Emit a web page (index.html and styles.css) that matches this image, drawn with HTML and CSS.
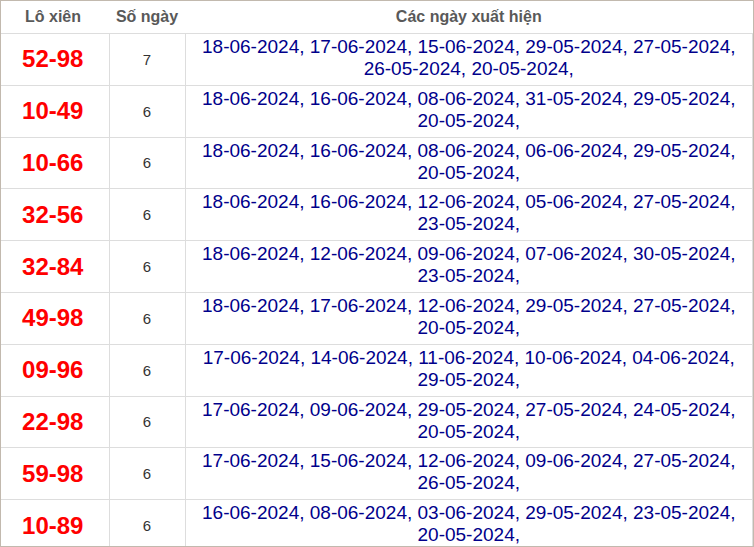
FILE: index.html
```html
<!DOCTYPE html>
<html>
<head>
<meta charset="utf-8">
<link rel="stylesheet" href="styles.css">
</head>
<body>
<div class="frame">
<table class="tbl">
<thead>
<tr><th class="c1">Lô xiên</th><th class="c2">Số ngày</th><th class="c3">Các ngày xuất hiện</th></tr>
</thead>
<tbody>
<tr><td class="pair">52-98</td><td class="cnt">7</td><td class="dates">18-06-2024, 17-06-2024, 15-06-2024, 29-05-2024, 27-05-2024, 26-05-2024, 20-05-2024,</td></tr>
<tr><td class="pair">10-49</td><td class="cnt">6</td><td class="dates">18-06-2024, 16-06-2024, 08-06-2024, 31-05-2024, 29-05-2024, 20-05-2024,</td></tr>
<tr><td class="pair">10-66</td><td class="cnt">6</td><td class="dates">18-06-2024, 16-06-2024, 08-06-2024, 06-06-2024, 29-05-2024, 20-05-2024,</td></tr>
<tr><td class="pair">32-56</td><td class="cnt">6</td><td class="dates">18-06-2024, 16-06-2024, 12-06-2024, 05-06-2024, 27-05-2024, 23-05-2024,</td></tr>
<tr><td class="pair">32-84</td><td class="cnt">6</td><td class="dates">18-06-2024, 12-06-2024, 09-06-2024, 07-06-2024, 30-05-2024, 23-05-2024,</td></tr>
<tr><td class="pair">49-98</td><td class="cnt">6</td><td class="dates">18-06-2024, 17-06-2024, 12-06-2024, 29-05-2024, 27-05-2024, 20-05-2024,</td></tr>
<tr><td class="pair">09-96</td><td class="cnt">6</td><td class="dates">17-06-2024, 14-06-2024, 11-06-2024, 10-06-2024, 04-06-2024, 29-05-2024,</td></tr>
<tr><td class="pair">22-98</td><td class="cnt">6</td><td class="dates">17-06-2024, 09-06-2024, 29-05-2024, 27-05-2024, 24-05-2024, 20-05-2024,</td></tr>
<tr><td class="pair">59-98</td><td class="cnt">6</td><td class="dates">17-06-2024, 15-06-2024, 12-06-2024, 09-06-2024, 27-05-2024, 26-05-2024,</td></tr>
<tr><td class="pair">10-89</td><td class="cnt">6</td><td class="dates">16-06-2024, 08-06-2024, 03-06-2024, 29-05-2024, 23-05-2024, 20-05-2024,</td></tr>
</tbody>
</table>
</div>
</body>
</html>
```
FILE: styles.css
```css
html, body {
  margin: 0;
  padding: 0;
  background: #fff;
}
.frame {
  width: 754px;
  height: 547px;
  box-sizing: border-box;
  border: 1px solid #c2b9ae;
  overflow: hidden;
  font-family: "Liberation Sans", Arial, sans-serif;
}
.tbl {
  width: 752px;
  border-collapse: collapse;
  table-layout: fixed;
}
.tbl th {
  height: 32px;
  padding: 0;
  font-size: 16px;
  font-weight: bold;
  color: #595959;
  text-align: center;
  vertical-align: middle;
  border-bottom: 1px solid #dddddd;
}
.tbl th.c1 { width: 104px; padding-right: 4px; }
.tbl th.c2 { width: 76px; }
.tbl td {
  height: 51.8px;
  padding: 0;
  box-sizing: border-box;
  border: 1px solid #dddddd;
  text-align: center;
}
.tbl tr td:first-child { border-left: none; }
.tbl tr td:last-child { border-right: 1px solid #dddddd; }
.tbl td.pair {
  font-size: 24px;
  font-weight: bold;
  color: #ff0000;
  vertical-align: middle;
  padding-right: 4px;
}
.tbl td.cnt {
  font-size: 15px;
  color: #333333;
  vertical-align: middle;
}
.tbl td.dates {
  font-size: 19px;
  line-height: 22px;
  color: #00008b;
  vertical-align: top;
  padding: 2px 6px 0 6px;
}
```
